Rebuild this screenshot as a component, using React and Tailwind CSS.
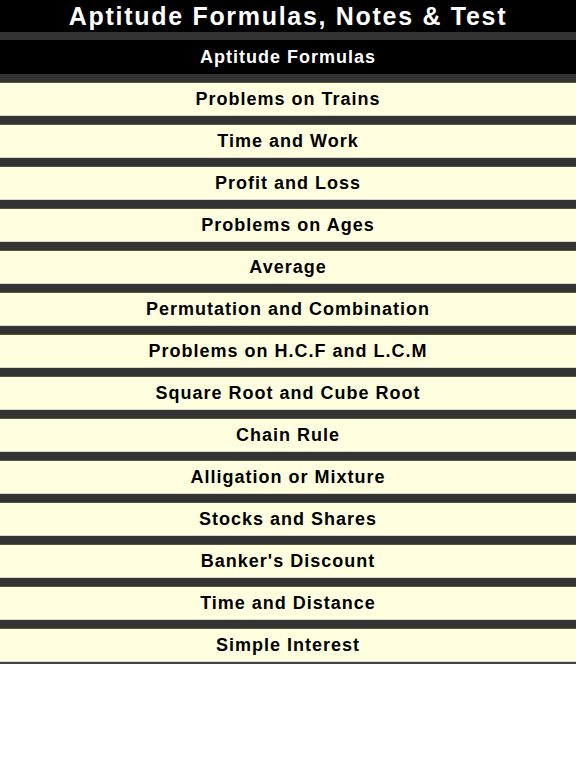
import React from 'react';

const topics = [
  'Problems on Trains',
  'Time and Work',
  'Profit and Loss',
  'Problems on Ages',
  'Average',
  'Permutation and Combination',
  'Problems on H.C.F and L.C.M',
  'Square Root and Cube Root',
  'Chain Rule',
  'Alligation or Mixture',
  'Stocks and Shares',
  "Banker's Discount",
  'Time and Distance',
  'Simple Interest',
];

const App = () => {
  return (
    <div className="min-h-[768px] bg-white font-['Liberation_Sans',Arial,sans-serif]">
      {/* App title */}
      <div className="h-8 bg-black flex items-center justify-center text-white font-bold text-[25px] tracking-[1.7px] leading-none">
        Aptitude Formulas, Notes &amp; Test
      </div>
      <div className="bg-[#333333] pt-2 border-b-2 border-[#444]">
        {/* Section header */}
        <div className="h-[34px] pt-[1px] bg-black flex items-center justify-center text-white font-bold text-[18px] tracking-[1px]">
          Aptitude Formulas
        </div>
        {topics.map((t) => (
          <div
            key={t}
            className="mt-2 h-[34px] pt-[1px] bg-[#ffffe0] border-t border-[#55553f] border-b border-b-[#d8d8c8] flex items-center justify-center text-black font-bold text-[18px] tracking-[1px]"
          >
            {t}
          </div>
        ))}
      </div>
    </div>
  );
};

export default App;
